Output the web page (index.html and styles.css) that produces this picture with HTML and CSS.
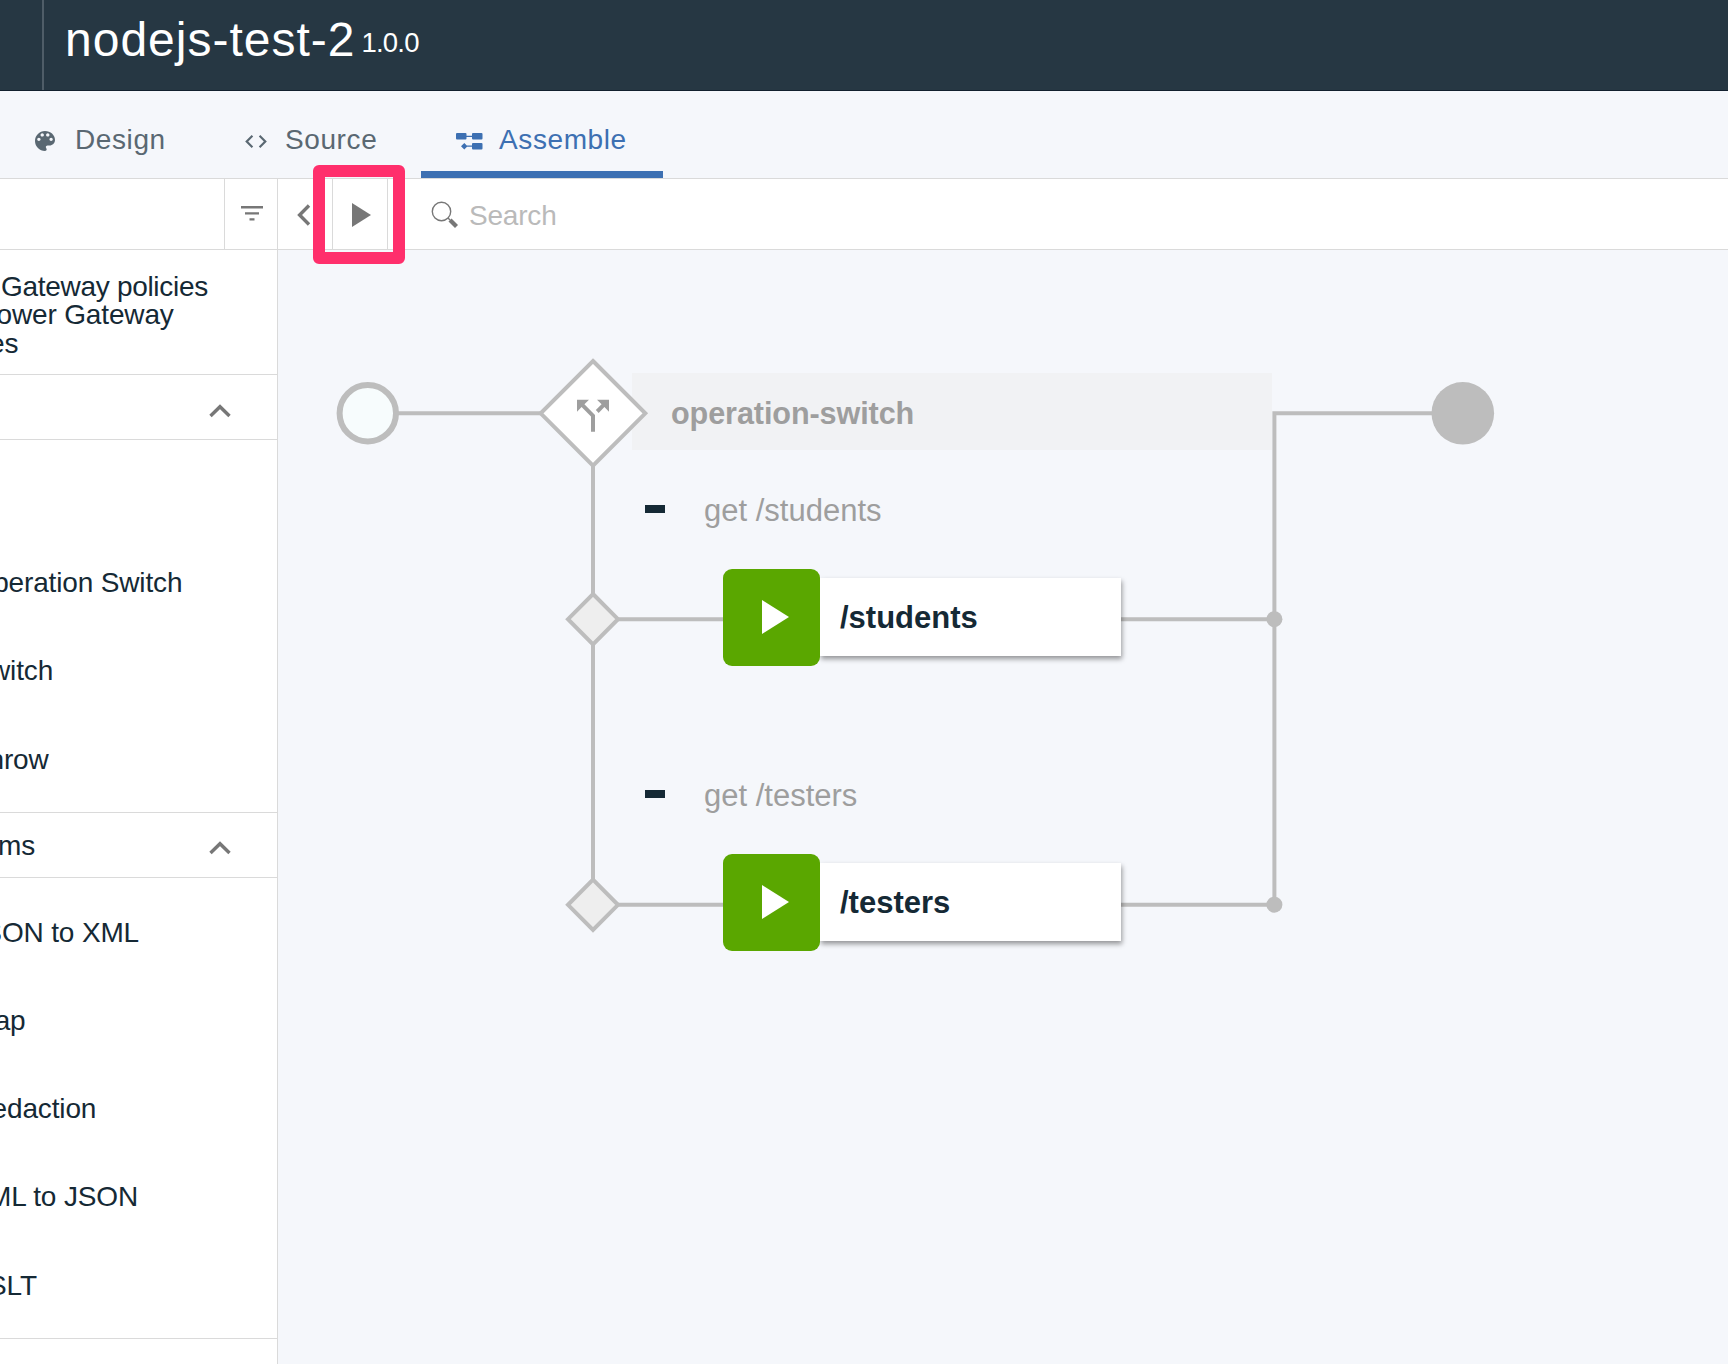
FILE: index.html
```html
<!DOCTYPE html>
<html lang="en">
<head>
<meta charset="utf-8">
<title>nodejs-test-2</title>
<link rel="stylesheet" href="styles.css">
</head>
<body>
<div class="app">
  <header class="header">
    <div class="header-stub"></div>
    <h1 class="title">nodejs-test-2</h1>
    <span class="version">1.0.0</span>
  </header>

  <nav class="tabs">
    <a class="tab">
      <svg class="icon-palette" viewBox="3 3 18 18"><path d="M12 3c-4.97 0-9 4.03-9 9s4.03 9 9 9c.83 0 1.5-.67 1.5-1.5 0-.39-.15-.74-.39-1.01-.23-.26-.38-.61-.38-.99 0-.83.67-1.5 1.5-1.5H16c2.76 0 5-2.24 5-5 0-4.42-4.03-8-9-8zm-5.500 9c-.83 0-1.500-.67-1.500-1.500S5.670 9 6.500 9 8 9.670 8 10.500 7.330 12 6.500 12zm3-4C8.670 8 8 7.330 8 6.500S8.670 5 9.500 5s1.500.67 1.500 1.500S10.330 8 9.500 8zm5 0c-.83 0-1.500-.67-1.500-1.500S13.670 5 14.500 5s1.500.67 1.500 1.500S15.330 8 14.500 8zm3 4c-.83 0-1.500-.67-1.500-1.500S16.670 9 17.500 9s1.500.67 1.500 1.500-.67 1.500-1.500 1.500z"/></svg>
      <span>Design</span>
    </a>
    <a class="tab">
      <svg class="icon-code" viewBox="2 6 20 12"><path d="M9.400 16.600L4.800 12l4.600-4.600L8 6l-6 6 6 6 1.400-1.400zm5.200 0l4.600-4.600-4.600-4.600L16 6l6 6-6 6-1.400-1.400z"/></svg>
      <span>Source</span>
    </a>
    <a class="tab tab-active">
      <svg class="icon-assemble" viewBox="0 0 27 18"><rect x="0" y="1" width="10.500" height="6.500" rx="1"/><rect x="16" y="1" width="10.500" height="6.500" rx="1"/><rect x="16" y="11" width="10.500" height="6.500" rx="1"/><path d="M10 3.700h6v1.200h-6zM8 13.600h8v1.200H8zM5 14.200l3.300-3.200 3.200 3.200-3.200 3.200z"/></svg>
      <span>Assemble</span>
    </a>
  </nav>

  <div class="toolbar">
    <div class="tool tool-blank"></div>
    <div class="tool tool-filter">
      <svg width="22" height="15" viewBox="0 0 22 15"><path d="M0 0h22v2.600H0zM4 6.200h14v2.400H4zM8.500 12.200h5v2.200h-5z"/></svg>
    </div>
    <div class="tool tool-back">
      <svg width="14" height="22" viewBox="0 0 14 22"><path class="stroke" d="M12 1.500L2.600 11l9.400 9.500"/></svg>
    </div>
    <div class="tool tool-play">
      <svg width="19" height="24" viewBox="0 0 19 24"><path d="M0 0l19 12L0 24z"/></svg>
      <div class="highlight"></div>
    </div>
    <div class="search">
      <svg width="28" height="28" viewBox="0 0 28 28"><circle class="lens" cx="10.500" cy="10.500" r="9.200"/><path class="lens" d="M17 17l2 2"/><path class="handle" d="M19 19l6.500 6.500"/></svg>
      <span>Search</span>
    </div>
  </div>

  <div class="body">
    <aside class="sidebar">
      <div class="filters">
        <span class="line line-a">Gateway policies</span>
        <span class="line line-b">Power Gateway</span>
        <span class="line line-c">es</span>
      </div>
      <div class="group-head">
        <span></span>
        <svg class="chevron" width="22" height="14" viewBox="0 0 22 14"><path class="stroke" d="M1.500 12L11 2.700l9.500 9.300"/></svg>
      </div>
      <ul class="group">
        <li class="item"></li>
        <li class="item">Operation Switch</li>
        <li class="item">Switch</li>
        <li class="item">Throw</li>
      </ul>
      <div class="group-head">
        <span class="group-name">ms</span>
        <svg class="chevron" width="22" height="14" viewBox="0 0 22 14"><path class="stroke" d="M1.500 12L11 2.700l9.500 9.300"/></svg>
      </div>
      <ul class="group">
        <li class="item item-caps">JSON to XML</li>
        <li class="item">Map</li>
        <li class="item">Redaction</li>
        <li class="item item-caps">XML to JSON</li>
        <li class="item item-caps">XSLT</li>
      </ul>
    </aside>

    <main class="canvas">
      <div class="switch-bar">operation-switch</div>
      <svg class="wires" viewBox="278 250 1450 1114">
        <g class="edge">
          <path d="M398 413.300H542"/>
          <path d="M593 465V882"/>
          <path d="M617 619.200H724M1120 619.200H1274"/>
          <path d="M617 904.700H724M1120 904.700H1274"/>
          <path d="M1434 413.300H1274.400V904"/>
        </g>
        <circle class="start" cx="367.800" cy="413.300" r="28.200"/>
        <circle class="solid" cx="1462.800" cy="413.300" r="31.300"/>
        <circle class="solid" cx="1274.400" cy="619.200" r="8"/>
        <circle class="solid" cx="1274.400" cy="904.700" r="8"/>
        <path class="gate" d="M593 361L645.300 413.300 593 465.600 540.700 413.300z"/>
        <path class="case" d="M593 594L618 619.200 593 644.300 568 619.200z"/>
        <path class="case" d="M593 879.600L618 904.800 593 929.900 568 904.800z"/>
        <path class="split" transform="translate(569 391.700) scale(2)" d="M14 4l2.290 2.290-2.880 2.880 1.420 1.420 2.880-2.880L20 10V4zm-4 0H4v6l2.290-2.290 4.710 4.700V20h2v-8.410l-5.290-5.300z"/>
      </svg>

      <section class="branch branch-students">
        <div class="branch-head"><i class="minus"></i><span>get /students</span></div>
        <div class="invoke">
          <div class="invoke-icon"><svg width="27" height="34" viewBox="0 0 27 34"><path d="M0 0l27 17L0 34z"/></svg></div>
          <div class="invoke-name">/students</div>
        </div>
      </section>

      <section class="branch branch-testers">
        <div class="branch-head"><i class="minus"></i><span>get /testers</span></div>
        <div class="invoke">
          <div class="invoke-icon"><svg width="27" height="34" viewBox="0 0 27 34"><path d="M0 0l27 17L0 34z"/></svg></div>
          <div class="invoke-name">/testers</div>
        </div>
      </section>
    </main>
  </div>
</div>
</body>
</html>
```

FILE: styles.css
```css
* { box-sizing: border-box; }

body {
  margin: 0;
  background: #f5f7fb;
  color: #152935;
  font-family: "Liberation Sans", Arial, sans-serif;
  font-size: 28px;
}

svg { display: block; flex: none; }

.app {
  display: flex;
  flex-direction: column;
  width: 1728px;
  height: 1364px;
  overflow: hidden;
}

/* Header */
.header {
  display: flex;
  flex: none;
  height: 91px;
  background: #263743;
  border-bottom: 1px solid #12202e;
  color: #fff;
}
.header-stub { width: 44px; border-right: 2px solid #4f5d68; }
.title {
  margin: 0 0 0 21px;
  font-size: 48px;
  font-weight: 400;
  line-height: 54px;
  padding-top: 13px;
  letter-spacing: 1px;
}
.version {
  margin-left: 6px;
  padding-top: 27px;
  font-size: 27.5px;
  line-height: 32px;
  letter-spacing: -0.8px;
}

/* Tabs */
.tabs {
  display: grid;
  grid-template-columns: 210px 211px 242px;
  flex: none;
  height: 88px;
  border-bottom: 1px solid #dadada;
  color: #5a6872;
}
.tab {
  display: flex;
  align-items: center;
  padding: 18px 0 0 35px;
  letter-spacing: 0.6px;
  border-bottom: 7px solid transparent;
}
.tab svg { fill: #5a6872; position: relative; top: 1px; }
.icon-palette { width: 20px; height: 20px; margin-right: 20px; }
.icon-code { width: 22px; height: 13px; margin-right: 18px; }
.tab .icon-assemble { width: 27px; height: 18px; margin-right: 16px; fill: #3d70b2; }
.tab-active { color: #3d70b2; border-bottom-color: #3d70b2; }

/* Toolbar */
.toolbar {
  display: flex;
  flex: none;
  height: 71px;
  background: #fff;
  border-bottom: 1px solid #dadada;
}
.tool { display: flex; align-items: center; border-right: 1px solid #dadada; fill: #777; }
.tool-blank { width: 225px; }
.tool-filter { width: 53px; padding: 0 0 1px 16px; }
.tool-back { width: 55px; padding: 2px 0 0 19px; }
.tool-play { position: relative; width: 55px; padding: 2px 0 0 19px; }
.stroke { fill: none; stroke: #777; stroke-width: 3.4; }
.highlight {
  position: absolute;
  left: -20px;
  top: -14px;
  width: 92px;
  height: 99px;
  border: 12px solid #ff2f6c;
  border-radius: 6px;
  z-index: 2;
}
.search { display: flex; align-items: center; padding: 2px 0 0 43px; color: #bababa; }
.search svg { margin-right: 10px; }
.search span { letter-spacing: -0.2px; padding-top: 2px; }
.lens { fill: none; stroke: #777; stroke-width: 1.4; }
.handle { fill: none; stroke: #777; stroke-width: 4.2; }

/* Body */
.body { display: flex; flex: 1; min-height: 0; }

.sidebar {
  flex: none;
  width: 278px;
  background: #fff;
  border-right: 1px solid #dadada;
  overflow: hidden;
  letter-spacing: -0.15px;
}
.filters { height: 125px; padding-top: 23px; border-bottom: 1px solid #dadada; }
.line { display: block; line-height: 28.3px; white-space: nowrap; }
.line-a { margin-left: 1px; letter-spacing: -0.3px; }
.line-b { margin-left: -22px; }
.line-c { margin-left: -11px; }
.group-head {
  display: flex;
  align-items: center;
  justify-content: space-between;
  height: 65px;
  padding-right: 46px;
  border-bottom: 1px solid #dadada;
}
.group-name { margin-left: -2px; padding-top: 3px; }
.chevron { margin-top: 7px; }
.group {
  margin: 0;
  padding: 11px 0 8px;
  list-style: none;
  border-bottom: 1px solid #dadada;
}
.item {
  height: 88.2px;
  margin-left: -28.5px;
  line-height: 88.5px;
  white-space: nowrap;
}
.item-caps { margin-left: -30.5px; }

/* Flow diagram */
.canvas { position: relative; flex: 1; font-size: 31px; }
.wires { position: absolute; left: 0; top: 0; width: 1450px; height: 1114px; }
.edge { fill: none; stroke: #bdbdbd; stroke-width: 4; }
.start { fill: #f7fcfd; stroke: #bdbdbd; stroke-width: 6; }
.solid { fill: #bdbdbd; }
.gate { fill: #fff; stroke: #bdbdbd; stroke-width: 4; }
.case { fill: #eee; stroke: #bdbdbd; stroke-width: 4; }
.split { fill: #9e9e9e; }

.switch-bar {
  position: absolute;
  left: 354px;
  top: 123px;
  width: 640px;
  height: 77px;
  padding-left: 39px;
  background: #f1f2f4;
  color: #9e9e9e;
  font-size: 30.6px;
  font-weight: 700;
  line-height: 80px;
  letter-spacing: -0.1px;
}

.branch { position: absolute; left: 367px; width: 476px; }
.branch-students { top: 241px; }
.branch-testers { top: 526px; }
.branch-head { display: flex; align-items: center; height: 40px; color: #9e9e9e; }
.minus { width: 20px; height: 8px; margin: -5px 39px 0 0; background: #152935; }
.invoke { display: flex; align-items: center; margin: 37.500px 0 0 78px; }
.invoke-icon {
  display: flex;
  flex: none;
  align-items: center;
  width: 97px;
  height: 97px;
  padding-left: 38.500px;
  border-radius: 9px;
  background: #5aa700;
  fill: #fff;
  z-index: 1;
}
.invoke-name {
  flex: 1;
  height: 78px;
  padding-left: 20px;
  background: #fff;
  box-shadow: 1px 3px 5px rgba(0, 0, 0, 0.4);
  font-weight: 700;
  line-height: 80px;
}
```
